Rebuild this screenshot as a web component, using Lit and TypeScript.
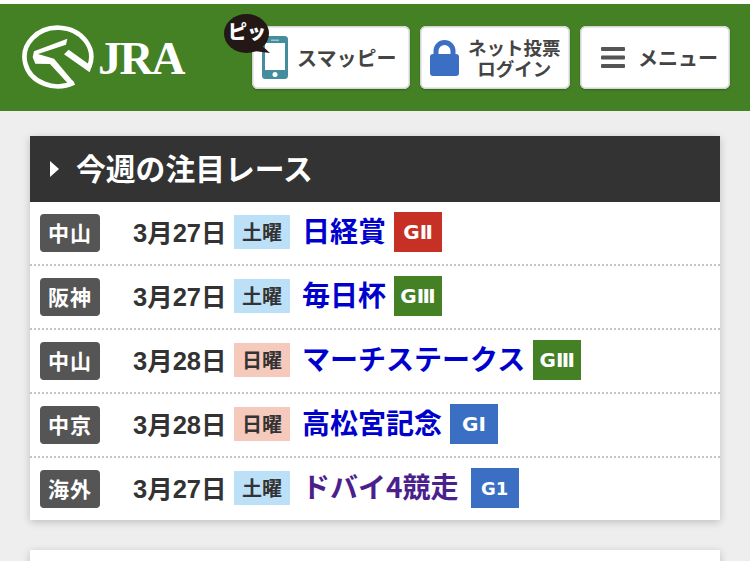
import { LitElement, html, css, svg } from "lit";
import { customElement } from "lit/decorators.js";

type Race = { venue: string; date: string; day: string; sat: boolean; name: string; grade: string; cls: string; overseas?: boolean };

const RACES: Race[] = [
  { venue: "中山", date: "3月27日", day: "土曜", sat: true, name: "日経賞", grade: "GⅡ", cls: "g2" },
  { venue: "阪神", date: "3月27日", day: "土曜", sat: true, name: "毎日杯", grade: "GⅢ", cls: "g3" },
  { venue: "中山", date: "3月28日", day: "日曜", sat: false, name: "マーチステークス", grade: "GⅢ", cls: "g3" },
  { venue: "中京", date: "3月28日", day: "日曜", sat: false, name: "高松宮記念", grade: "GⅠ", cls: "g1" },
  { venue: "海外", date: "3月27日", day: "土曜", sat: true, name: "ドバイ4競走", grade: "G1", cls: "g1 intl", overseas: true },
];

@customElement("app-root")
export class AppRoot extends LitElement {
  static styles = css`
    :host {
      display: block;
      height: 561px;
      overflow: hidden;
      background: #eeeeee;
      font-family: "Liberation Sans", "Noto Sans CJK JP", sans-serif;
    }
    .top { height: 4px; background: #fff; }
    .header {
      height: 107px;
      background: #448125;
      display: flex;
      align-items: center;
      padding: 0 20px 0 18px;
      box-sizing: border-box;
    }
    .logo { display: flex; align-items: center; }
    .logo svg { display: block; width: 79px; height: 72px; }
    .jra {
      font-family: "Liberation Serif", serif;
      font-weight: 700;
      font-size: 47px;
      line-height: 1;
      color: #fff;
      letter-spacing: -2px;
      margin: 1px 0 0 1px;
    }
    .btns { margin-left: auto; display: flex; gap: 10px; }
    .btn {
      position: relative;
      height: 63px;
      box-sizing: border-box;
      background: #fff;
      border-radius: 6px;
      box-shadow: 0 0 0 1.5px #d4d4d4 inset, 0 1px 2px rgba(0,0,0,0.25);
      display: flex;
      align-items: center;
      color: #444;
      font-weight: 700;
      font-family: "Noto Sans CJK JP", sans-serif;
    }
    .b1 { width: 158px; padding-left: 10px; gap: 9px; font-size: 20px; }
    .b2 { width: 150px; padding-left: 10px; gap: 9px; font-size: 18.5px; line-height: 21px; }
    .b3 { width: 150px; padding-left: 21px; gap: 13px; font-size: 20px; }
    .b2 .t { text-align: center; white-space: nowrap; }
    .bubble {
      position: absolute;
      left: -28px;
      top: -12px;
      width: 45px;
      height: 39px;
    }
    .bubble svg { position: absolute; inset: 0; width: 50px; height: 42px; overflow: visible; }
    .bubble span {
      position: absolute;
      left: 4px;
      top: 4px;
      font-size: 19px;
      line-height: 26px;
      color: #fff;
      font-weight: 900;
      white-space: nowrap;
    }
    .card {
      margin: 25px 30px 0;
      background: #fff;
      box-shadow: 0 2px 8px rgba(0,0,0,0.2);
    }
    .card-h {
      height: 66px;
      box-sizing: border-box;
      background: #333;
      color: #fff;
      display: flex;
      align-items: center;
      padding-left: 20px;
      gap: 17px;
      font-family: "Noto Sans CJK JP", sans-serif;
      font-weight: 700;
      font-size: 29.8px;
    }
    .card-h .title { padding-bottom: 4px; }
    .tri {
      width: 0; height: 0;
      border-left: 9px solid #fff;
      border-top: 8px solid transparent;
      border-bottom: 8px solid transparent;
    }
    .row {
      height: 64px;
      box-sizing: border-box;
      display: flex;
      align-items: center;
      padding: 0 10px;
      border-bottom: 2px dotted #c4c4c4;
      font-family: "Noto Sans CJK JP", sans-serif;
      font-weight: 700;
    }
    .row:last-child { border-bottom: none; height: 62px; }
    .venue {
      width: 60px; height: 38px;
      box-sizing: border-box;
      padding-bottom: 3px;
      background: #555;
      color: #fff;
      border-radius: 4px;
      display: flex; align-items: center; justify-content: center;
      font-size: 21px;
      letter-spacing: 1px;
    }
    .date {
      width: 101px;
      margin-left: 33px;
      padding-bottom: 5px;
      color: #333;
      font-size: 25.5px;
      font-family: "Liberation Sans", "Noto Sans CJK JP", sans-serif;
      white-space: nowrap;
    }
    .day {
      width: 56px; height: 34px;
      box-sizing: border-box;
      padding-bottom: 2px;
      margin-bottom: 2px;
      display: flex; align-items: center; justify-content: center;
      color: #333;
      font-size: 20px;
    }
    .sat { background: #bce0f7; }
    .sun { background: #f6c9bd; }
    .name {
      margin-left: 12px;
      padding-bottom: 6px;
      font-size: 28px;
      color: #0000cc;
      white-space: nowrap;
    }
    .name.ovs { color: #4b1f8c; }
    .grade {
      margin-left: 8px;
      margin-bottom: 2px;
      width: 48px; height: 40px;
      display: flex; align-items: center; justify-content: center;
      color: #fff;
      font-family: "DejaVu Sans", sans-serif;
      font-weight: 700;
      font-size: 20px;
    }
    .g2 { background: #c63025; }
    .g3 { background: #448125; }
    .g1 { background: #3a6fc4; }
    .intl { margin-left: 12px; font-size: 18px; }
    .card.next { margin-top: 30px; height: 40px; }
  `;

  render() {
    return html`
      <div class="top"></div>
      <div class="header">
        <div class="logo">
          <svg viewBox="0 0 237 216">
            <path d="M214 134 A100 88 0 1 0 168 182" fill="none" stroke="#fff" stroke-width="14"/>
            <path d="M148 50 L144 68 L60 96 L108 110 L170 184 L152 187 L96 126 L52 125 L44 106 L48 88 Z" fill="#fff"/>
            <path d="M152 83 L221 133 L215 151 L138 97 Z" fill="#fff"/>
          </svg>
          <span class="jra">JRA</span>
        </div>
        <div class="btns">
          <div class="btn b1">
            <div class="bubble">
              <svg viewBox="0 0 50 42">
                <ellipse cx="22.5" cy="19.5" rx="22.5" ry="19.5" fill="#231815"/>
                <path d="M36 30 L46 39 L30 37 Z" fill="#231815"/>
              </svg>
              <span>ピッ</span>
            </div>
            <svg width="26" height="43" viewBox="0 0 26 43">
              <rect width="26" height="43" rx="3.5" fill="#458c9e"/>
              <rect x="3" y="7" width="20" height="27" fill="#fff"/>
              <rect x="9" y="3.5" width="8" height="1.5" fill="#9cc6d0"/>
              <circle cx="13" cy="38.5" r="2.5" fill="#fff"/>
            </svg>
            <span>スマッピー</span>
          </div>
          <div class="btn b2">
            <svg width="29" height="36" viewBox="0 0 29 36">
              <path d="M6 16 V11 A8.5 8.5 0 0 1 23 11 V16" fill="none" stroke="#3a6fc4" stroke-width="5"/>
              <rect y="14" width="29" height="22" rx="3" fill="#3a6fc4"/>
            </svg>
            <span class="t">ネット投票<br />ログイン</span>
          </div>
          <div class="btn b3">
            <svg width="24" height="21" viewBox="0 0 24 21">
              ${[0, 8.5, 17].map((y) => svg`<rect y=${y} width="24" height="4" rx="1" fill="#555"/>`)}
            </svg>
            <span>メニュー</span>
          </div>
        </div>
      </div>
      <div class="card">
        <div class="card-h"><span class="tri"></span><span class="title">今週の注目レース</span></div>
        ${RACES.map(
          (r) => html`
            <div class="row">
              <span class="venue">${r.venue}</span>
              <span class="date">${r.date}</span>
              <span class="day ${r.sat ? "sat" : "sun"}">${r.day}</span>
              <span class="name ${r.overseas ? "ovs" : ""}">${r.name}</span>
              <span class="grade ${r.cls}">${r.grade}</span>
            </div>
          `
        )}
      </div>
      <div class="card next"></div>
    `;
  }
}
